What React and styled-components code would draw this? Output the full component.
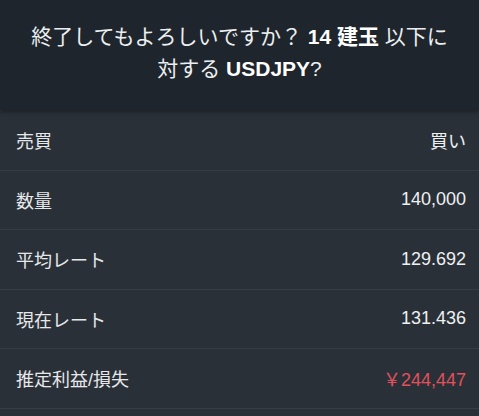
import React from "react";
import styled, { createGlobalStyle } from "styled-components";

const Global = createGlobalStyle`
  html, body { margin: 0; padding: 0; background: #2a3038; }
  body { font-family: "Liberation Sans", Arial, "Noto Sans CJK JP", sans-serif; }
`;

const Page = styled.div`
  width: 479px;
  height: 416px;
  background: #2a3038;
  overflow: hidden;
`;

const Header = styled.header`
  box-sizing: border-box;
  height: 110px;
  padding: 21px 20px 0;
  background: #1f252c;
  box-shadow: 0 2px 4px rgba(0, 0, 0, 0.35);
  position: relative;
  z-index: 1;
  color: #eceff1;
  font-size: 21px;
  line-height: 32px;
  text-align: center;
`;

const Strong = styled.b`
  font-weight: bold;
  color: #ffffff;
`;

const List = styled.div`
  display: flex;
  flex-direction: column;
  padding-top: 1px;
`;

const Row = styled.div`
  box-sizing: border-box;
  height: 59.5px;
  display: flex;
  align-items: center;
  justify-content: space-between;
  padding: 0 13px 0 16px;
  border-bottom: 1px solid #363d46;
  font-size: 18px;
`;

const Label = styled.span`
  color: #e6e8ea;
`;

const Value = styled.span`
  color: ${(p) => (p.$negative ? "#e0515c" : "#eef0f2")};
`;

const rows = [
  ["売買", "買い"],
  ["数量", "140,000"],
  ["平均レート", "129.692"],
  ["現在レート", "131.436"],
  ["推定利益/損失", "￥244,447", true],
];

export default function App() {
  return (
    <Page>
      <Global />
      <Header>
        終了してもよろしいですか？ <Strong>14 建玉</Strong> 以下に
        <br />
        対する <Strong>USDJPY</Strong>?
      </Header>
      <List>
        {rows.map(([l, v, neg]) => (
          <Row key={l}>
            <Label>{l}</Label>
            <Value $negative={neg}>{v}</Value>
          </Row>
        ))}
      </List>
    </Page>
  );
}
